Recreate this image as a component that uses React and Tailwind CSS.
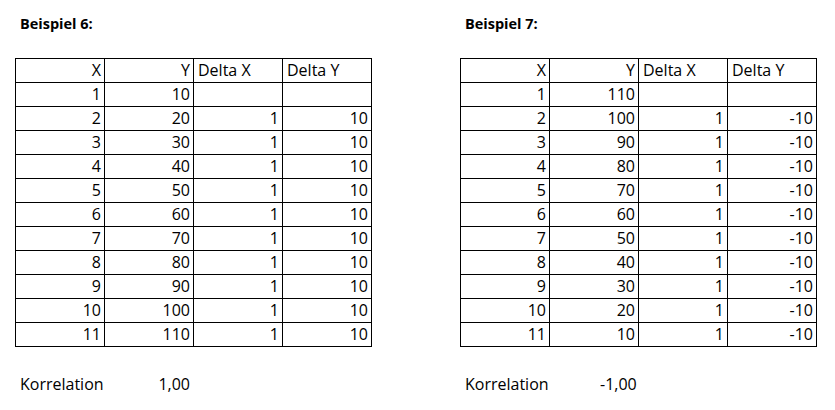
const ex6 = Array.from({ length: 11 }, (_, i) => [String(i + 1), String((i + 1) * 10), i === 0 ? "" : "1", i === 0 ? "" : "10"]);
const ex7 = Array.from({ length: 11 }, (_, i) => [String(i + 1), String(110 - i * 10), i === 0 ? "" : "1", i === 0 ? "" : "-10"]);

function Block({ title, rows, corr }) {
  return (
    <div className="flex flex-col w-[357px]">
      <div className="h-[58px] pl-[5px] pt-[13px] text-[14.5px] leading-[22px] font-bold">{title}</div>
      <div className="grid grid-cols-[repeat(4,89px)] border-l border-t border-black">
        {["X", "Y"].map((h) => (
          <div key={h} className="h-[24px] border-r border-b border-black text-right pr-[3px] leading-[23px]">{h}</div>
        ))}
        {["Delta X", "Delta Y"].map((h) => (
          <div key={h} className="h-[24px] border-r border-b border-black text-left pl-[4px] leading-[23px]">{h}</div>
        ))}
        {rows.flat().map((v, i) => (
          <div key={i} className="h-[24px] border-r border-b border-black text-right pr-[3px] leading-[23px]">{v}</div>
        ))}
      </div>
      <div className="flex pl-[5px] pt-[26px] leading-[22px]">
        <span className="w-[135px]">Korrelation</span>
        <span className="w-[35px] text-right">{corr}</span>
      </div>
    </div>
  );
}

export default function App() {
  return (
    <div className="w-[835px] h-[410px] bg-white text-black flex gap-[88px] pl-[15px] text-[16px]" style={{ fontFamily: '"Open Sans", sans-serif' }}>
      <Block title="Beispiel 6:" rows={ex6} corr="1,00" />
      <Block title="Beispiel 7:" rows={ex7} corr="-1,00" />
    </div>
  );
}
